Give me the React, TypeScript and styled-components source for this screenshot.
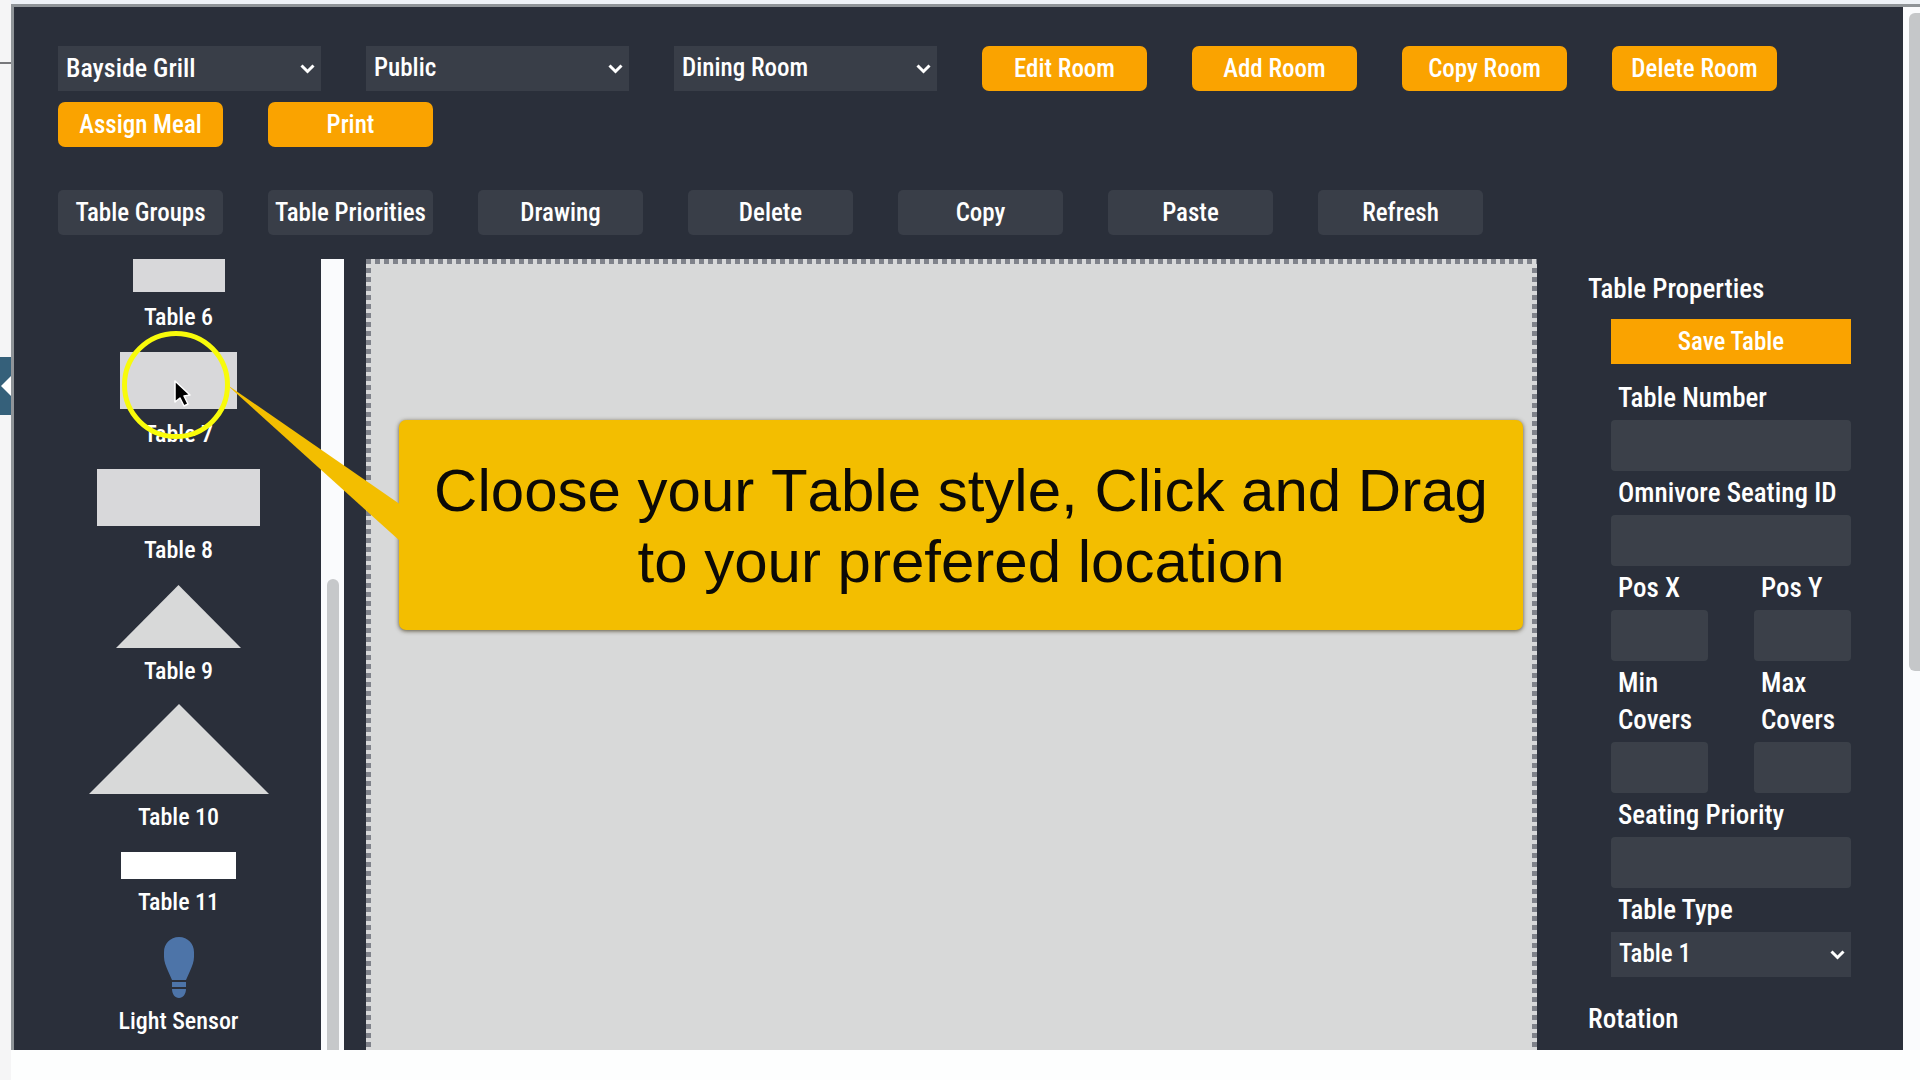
import React, { useId } from "react";
import styled, { createGlobalStyle, css } from "styled-components";

const ui = '"Roboto Condensed", Roboto, "Liberation Sans", sans-serif';

const Global = createGlobalStyle`
  *, *::before, *::after { box-sizing: border-box; }
  body { margin: 0; background: #fdfefe; overflow: hidden; }
  button, input, select { font: inherit; color: inherit; }
`;

const Page = styled.div`
  display: flex;
  height: 100vh;
  position: relative;
  font-family: ${ui};
  font-size: 25px;
  font-weight: 500;
  color: #fff;
`;

const Rail = styled.aside`
  flex: none;
  width: 11px;
  background: #f5f5f6;
  display: flex;
  flex-direction: column;
`;

const RailHead = styled.div`
  height: 64px;
  border-bottom: 2px solid #77787b;
`;

const RailTab = styled.button`
  margin: 293px 0 0;
  padding: 0;
  border: 0;
  height: 58px;
  background: #35607a;
  display: flex;
  align-items: center;
  justify-content: flex-end;
`;

const Shell = styled.div`
  flex: 1;
  min-width: 0;
  display: flex;
  flex-direction: column;
  padding: 4px 0 30px;
  background: linear-gradient(#eef2f7 4px, #fdfefe 4px);
`;

const Frame = styled.div`
  flex: 1;
  min-height: 0;
  display: flex;
  border-top: 3px solid #8f9498;
  border-left: 3px solid #8f9498;
`;

const Panel = styled.main`
  flex: 1;
  min-width: 0;
  display: flex;
  flex-direction: column;
  background: #2a2f3a;
`;

const PageScroll = styled.div`
  flex: none;
  width: 17px;
  padding: 6px 0 0 6px;
  background: #fafbfd;
`;

const PageThumb = styled.div`
  height: 658px;
  border-radius: 6px 0 0 6px;
  background: #c5c7c9;
`;

const Bar = styled.div<{ $top: number }>`
  display: flex;
  flex-wrap: wrap;
  gap: 11px 45px;
  padding: ${(p) => p.$top}px 44px 0;
`;

const control = css`
  height: 45px;
  border: 0;
  text-align: center;
  white-space: nowrap;
  padding: 0;
`;

const RoomButton = styled.button`
  ${control}
  width: 165px;
  border-radius: 7px;
  background: #faa300;
`;

const ToolButton = styled.button`
  ${control}
  width: 165px;
  border-radius: 5px;
  background: #393e48;
`;

const SelectBox = styled.div<{ $width: string; $size: number }>`
  display: grid;
  align-items: center;
  width: ${(p) => p.$width};
  height: 45px;
  font-size: ${(p) => p.$size}px;
  background: #393e48;
  > * { grid-area: 1 / 1; }
  > svg { justify-self: end; margin-right: 6px; pointer-events: none; }
`;

const Select = styled.select`
  appearance: none;
  width: 100%;
  height: 45px;
  padding: 0 32px 2px 8px;
  border: 0;
  background: transparent;
`;

const Work = styled.div`
  flex: 1;
  min-height: 0;
  display: flex;
  margin-top: 24px;
`;

const Shapes = styled.ul`
  flex: none;
  width: 307px;
  margin: 0;
  padding: 0 0 0 22px;
  list-style: none;
  overflow: hidden;
`;

const ShapeItem = styled.li<{ $after: number }>`
  display: flex;
  flex-direction: column;
  align-items: center;
  font-size: 24px;
  line-height: 46px;
  padding-bottom: ${(p) => p.$after}px;
`;

const ShapeArt = styled.svg`
  display: block;
`;

const ListScroll = styled.div`
  flex: none;
  width: 23px;
  padding: 320px 5px 0 6px;
  background: #fafbfd;
`;

const ListThumb = styled.div`
  height: 100%;
  border-radius: 6px 6px 0 0;
  background: #c6c8ca;
`;

const dots = (dir: string) => `repeating-linear-gradient(${dir}, #7f828a 0 5px, #d8d9da 5px 9px)`;

const Canvas = styled.section`
  flex: 1;
  min-width: 0;
  margin-left: 22px;
  background:
    ${dots("to right")} top / 100% 5px no-repeat,
    ${dots("to bottom")} left / 5px 100% no-repeat,
    ${dots("to bottom")} right / 5px 100% no-repeat,
    #d8d9d9;
`;

const Props = styled.form`
  flex: none;
  width: 366px;
  padding: 11px 52px 0 51px;
  font-size: 27px;
  line-height: 37px;
  overflow: hidden;
`;

const Heading = styled.h2`
  margin: 0;
  font-size: 27px;
  font-weight: 500;
  line-height: 38px;
`;

const Fields = styled.div`
  display: grid;
  grid-template-columns: 1fr 1fr;
  column-gap: 46px;
  padding: 11px 0 23px 23px;
`;

const SaveButton = styled.button`
  ${control}
  grid-column: 1 / -1;
  margin-bottom: 12px;
  font-size: 25px;
  background: #faa300;
`;

const FieldBox = styled.div<{ $half?: boolean }>`
  grid-column: ${(p) => (p.$half ? "auto" : "1 / -1")};
  display: flex;
  flex-direction: column;
`;

const Label = styled.label`
  padding: 4px 7px 3px;
`;

const Input = styled.input`
  width: 100%;
  height: 51px;
  padding: 0 8px;
  border: 0;
  border-radius: 4px;
  background: #3b4049;
`;

const Overlay = styled.div`
  position: absolute;
  inset: 0;
  pointer-events: none;
`;

const Marks = styled.svg`
  position: absolute;
  left: 100px;
  top: 320px;
`;

const Callout = styled.p`
  position: absolute;
  left: 399px;
  top: 420px;
  width: 1124px;
  margin: 0;
  padding: 35px 20px 33px;
  border-radius: 7px;
  background: #f3be00;
  box-shadow: 0 1px 4px rgba(60, 50, 20, 0.8);
  color: #0c0a06;
  font-family: "Liberation Sans", Arial, sans-serif;
  font-size: 60px;
  font-weight: 400;
  font-kerning: none;
  line-height: 71px;
  text-align: center;
`;

const Chevron = () => (
  <svg width="15" height="12" viewBox="0 0 15 12" fill="none" aria-hidden="true">
    <path d="M1.5 2.5 7.5 8.5 13.5 2.5" stroke="#fff" strokeWidth="3" />
  </svg>
);

type PickerProps = { label?: string; id: string; value: string; width: string; size?: number };

function Picker({ label, id, value, width, size = 25 }: PickerProps) {
  return (
    <SelectBox $width={width} $size={size}>
      <Select id={id} aria-label={label} defaultValue={value}>
        <option>{value}</option>
      </Select>
      <Chevron />
    </SelectBox>
  );
}

function Field({ label, half }: { label: string; half?: boolean }) {
  const id = useId();
  return (
    <FieldBox $half={half}>
      <Label htmlFor={id}>{label}</Label>
      <Input id={id} type="text" />
    </FieldBox>
  );
}

type Shape = {
  name: string;
  w: number;
  h: number;
  box: number;
  kind: "rect" | "triangle" | "bulb";
  fill: string;
  after?: number;
};

const shapes: Shape[] = [
  { name: "Table 6", w: 92, h: 33, box: 35, kind: "rect", fill: "#d8d8da" },
  { name: "Table 7", w: 117, h: 57, box: 59, kind: "rect", fill: "#d8d8da" },
  { name: "Table 8", w: 163, h: 57, box: 58, kind: "rect", fill: "#d8d8da" },
  { name: "Table 9", w: 125, h: 63, box: 63, kind: "triangle", fill: "#d8d9d9", after: 10 },
  { name: "Table 10", w: 180, h: 90, box: 90, kind: "triangle", fill: "#d8d9d9" },
  { name: "Table 11", w: 115, h: 27, box: 27, kind: "rect", fill: "#ffffff" },
  { name: "Light Sensor", w: 30, h: 61, box: 61, kind: "bulb", fill: "#4d74a8" },
];

function ShapeRow({ shape }: { shape: Shape }) {
  const { w, h, box, kind, fill, name, after = 12 } = shape;
  return (
    <ShapeItem $after={after}>
      <ShapeArt width={w} height={box} fill={fill} aria-hidden="true">
        {kind === "rect" && <rect width={w} height={h} />}
        {kind === "triangle" && <path d={`M${w / 2} 0 L${w} ${h} H0Z`} />}
        {kind === "bulb" && (
          <path d="M15 0C6 0 0 7 0 15v5c0 5 2 9 4 14l4 9h14l4-9c2-5 4-9 4-14v-5C30 7 24 0 15 0ZM8 45h14v5H8ZM8 52h14c0 5-3 9-7 9s-7-4-7-9Z" />
        )}
      </ShapeArt>
      {name}
    </ShapeItem>
  );
}

export default function App() {
  return (
    <Page>
      <Global />
      <Rail>
        <RailHead />
        <RailTab aria-label="Collapse sidebar">
          <svg width="10" height="20" viewBox="0 0 10 20" aria-hidden="true">
            <path d="M10 0 0 10 10 20Z" fill="#fff" />
          </svg>
        </RailTab>
      </Rail>
      <Shell>
        <Frame>
          <Panel>
            <Bar $top={39}>
              <Picker id="restaurant" label="Restaurant" value="Bayside Grill" width="263px" size={26} />
              <Picker id="visibility" label="Visibility" value="Public" width="263px" />
              <Picker id="room" label="Room" value="Dining Room" width="263px" />
              {["Edit Room", "Add Room", "Copy Room", "Delete Room", "Assign Meal", "Print"].map((t) => (
                <RoomButton key={t}>{t}</RoomButton>
              ))}
            </Bar>
            <Bar $top={43}>
              {["Table Groups", "Table Priorities", "Drawing", "Delete", "Copy", "Paste", "Refresh"].map((t) => (
                <ToolButton key={t}>{t}</ToolButton>
              ))}
            </Bar>
            <Work>
              <Shapes>
                {shapes.map((s) => (
                  <ShapeRow key={s.name} shape={s} />
                ))}
              </Shapes>
              <ListScroll>
                <ListThumb />
              </ListScroll>
              <Canvas aria-label="Room layout" />
              <Props onSubmit={(e) => e.preventDefault()}>
                <Heading>Table Properties</Heading>
                <Fields>
                  <SaveButton>Save Table</SaveButton>
                  <Field label="Table Number" />
                  <Field label="Omnivore Seating ID" />
                  <Field label="Pos X" half />
                  <Field label="Pos Y" half />
                  <Field label="Min Covers" half />
                  <Field label="Max Covers" half />
                  <Field label="Seating Priority" />
                  <FieldBox>
                    <Label htmlFor="table-type">Table Type</Label>
                    <Picker id="table-type" value="Table 1" width="100%" />
                  </FieldBox>
                </Fields>
                <Heading>Rotation</Heading>
              </Props>
            </Work>
          </Panel>
          <PageScroll>
            <PageThumb />
          </PageScroll>
        </Frame>
      </Shell>
      <Overlay>
        <Callout>Cloose your Table style, Click and Drag to your prefered location</Callout>
        <Marks width="300" height="230" viewBox="100 320 300 230" aria-hidden="true">
          <path d="M226 384 401 505V542Z" fill="#f3be00" />
          <circle cx="176" cy="385" r="51.5" fill="none" stroke="#f8fb0a" strokeWidth="5" />
          <path
            d="M175 381v21l5-4 4 8 4-2-4-8 6-1Z"
            fill="#000"
            stroke="#fff"
            strokeWidth="1.5"
            strokeLinejoin="round"
          />
        </Marks>
      </Overlay>
    </Page>
  );
}
